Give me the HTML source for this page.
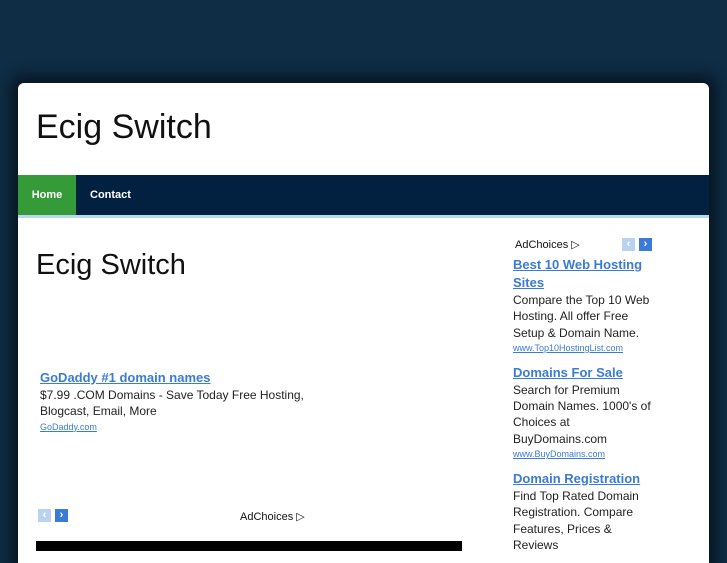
<!DOCTYPE html>
<html><head><style>
body{margin:0;width:727px;height:545px;overflow:hidden;background:#0f2d45;font-family:"Liberation Sans",sans-serif;position:relative}
.card{position:absolute;left:18px;top:83px;width:691px;height:480px;background:#fff;border-radius:6px 6px 0 0;box-shadow:0 0 14px 8px rgba(5,15,25,.75)}
h1{position:absolute;left:18px;top:25px;margin:0;font-weight:normal;font-size:34px;color:#111}
.nav{position:absolute;left:0;top:92px;width:691px;height:40px;background:#022140;border-bottom:3px solid #b8d8ee}
.nav a{position:absolute;top:0;height:40px;line-height:40px;color:#fff;font-weight:bold;font-size:11px;text-decoration:none}
.home{left:0;width:58px;background:#359a38;text-align:center}
.contact{left:72px}
h2{position:absolute;left:18px;top:166px;margin:0;font-weight:normal;font-size:29px;color:#111}
.ad{position:absolute;font-size:12px;line-height:16.3px;color:#222}
.ad a.t{color:#3a7bd5;font-weight:bold;font-size:13px;text-decoration:underline;line-height:18px}
.ad a.u{color:#3a7bd5;font-size:9px;text-decoration:underline;display:block;line-height:15px}
.ac{position:absolute;font-size:11px;color:#111}
.btn{position:absolute;width:13px;height:13px;color:#fff;font-size:11px;line-height:13px;text-align:center;font-weight:bold}
</style></head><body>
<div class="card">
<h1>Ecig Switch</h1>
<div class="nav"><a class="home">Home</a><a class="contact">Contact</a></div>
<h2>Ecig Switch</h2>
<div class="ad" style="left:22px;top:286px;width:300px"><a class="t">GoDaddy #1 domain names</a><br>$7.99 .COM Domains - Save Today Free Hosting, Blogcast, Email, More<a class="u">GoDaddy.com</a></div>
<div class="btn" style="left:20px;top:426px;background:#b9d2f0">‹</div>
<div class="btn" style="left:37px;top:426px;background:#3a7bd5">›</div>
<div class="ac" style="left:222px;top:427px">AdChoices ▷</div>
<div style="position:absolute;left:18px;top:458px;width:426px;height:10px;background:#000"></div>
<div class="ac" style="left:497px;top:155px">AdChoices ▷</div>
<div class="btn" style="left:604px;top:155px;background:#b9d2f0">‹</div>
<div class="btn" style="left:621px;top:155px;background:#3a7bd5">›</div>
<div class="ad" style="left:495px;top:173px;width:145px">
<a class="t">Best 10 Web Hosting Sites</a><br>Compare the Top 10 Web Hosting. All offer Free Setup &amp; Domain Name.<a class="u">www.Top10HostingList.com</a>
<div style="height:8px"></div>
<a class="t">Domains For Sale</a><br>Search for Premium Domain Names. 1000's of Choices at BuyDomains.com<a class="u">www.BuyDomains.com</a>
<div style="height:8px"></div>
<a class="t">Domain Registration</a><br>Find Top Rated Domain Registration. Compare Features, Prices &amp; Reviews</div>
</div>
</body></html>
